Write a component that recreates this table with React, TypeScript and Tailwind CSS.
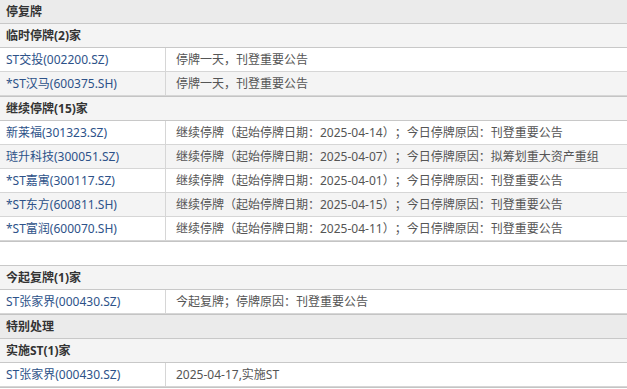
type Row = { name: string; text: string };

const font = { fontFamily: '"Noto Sans", "Noto Sans CJK SC", sans-serif' };

function SectionHeader({ title }: { title: string }) {
  return (
    <div className="h-[24px] flex items-center px-1.5 bg-[#ebebeb] border-b border-[#c8c8c8] text-[12px] font-bold text-[#333]">
      {title}
    </div>
  );
}

function GroupTable({ title, rows }: { title: string; rows: Row[] }) {
  return (
    <div className="border-b border-[#c4c4c4]">
      <div className="h-[24px] flex items-center px-1.5 bg-[#f4f4f4] border-b border-[#c8c8c8] text-[12px] font-bold text-[#333]">
        {title}
      </div>
      {rows.map((r, i) => (
        <div
          key={i}
          className={`grid grid-cols-[166px_1fr] h-[24px] border-b border-[#d6d6d6] text-[12px] ${
            i % 2 === 1 ? 'bg-[#f4f4f4]' : 'bg-white'
          }`}
        >
          <div className="flex items-center px-1.5 border-r border-[#d6d6d6] text-[#2d5289] whitespace-nowrap">
            {r.name}
          </div>
          <div className="flex items-center pl-[10px] text-[#555] whitespace-nowrap">{r.text}</div>
        </div>
      ))}
    </div>
  );
}

export default function App() {
  const temp: Row[] = [
    { name: 'ST交投(002200.SZ)', text: '停牌一天，刊登重要公告' },
    { name: '*ST汉马(600375.SH)', text: '停牌一天，刊登重要公告' },
  ];

  const cont: Row[] = [
    { name: '新莱福(301323.SZ)', text: '继续停牌（起始停牌日期：2025-04-14）；今日停牌原因：刊登重要公告' },
    { name: '琏升科技(300051.SZ)', text: '继续停牌（起始停牌日期：2025-04-07）；今日停牌原因：拟筹划重大资产重组' },
    { name: '*ST嘉寓(300117.SZ)', text: '继续停牌（起始停牌日期：2025-04-01）；今日停牌原因：刊登重要公告' },
    { name: '*ST东方(600811.SH)', text: '继续停牌（起始停牌日期：2025-04-15）；今日停牌原因：刊登重要公告' },
    { name: '*ST富润(600070.SH)', text: '继续停牌（起始停牌日期：2025-04-11）；今日停牌原因：刊登重要公告' },
  ];

  const resume: Row[] = [{ name: 'ST张家界(000430.SZ)', text: '今起复牌；停牌原因：刊登重要公告' }];

  const st: Row[] = [{ name: 'ST张家界(000430.SZ)', text: '2025-04-17,实施ST' }];

  return (
    <div
      className="w-[627px] h-[389px] overflow-hidden bg-white leading-none [text-spacing-trim:space-all]"
      style={font}
    >
      <SectionHeader title="停复牌" />
      <GroupTable title="临时停牌(2)家" rows={temp} />
      <GroupTable title="继续停牌(15)家" rows={cont} />
      <div className="h-[24px] border-b border-[#c8c8c8]" />
      <GroupTable title="今起复牌(1)家" rows={resume} />
      <SectionHeader title="特别处理" />
      <GroupTable title="实施ST(1)家" rows={st} />
    </div>
  );
}
